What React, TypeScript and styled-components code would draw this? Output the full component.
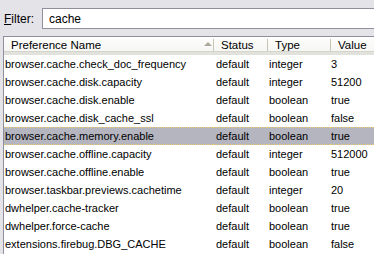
import React from 'react'
import styled, {createGlobalStyle} from 'styled-components'

const GlobalStyle = createGlobalStyle`
    html, body {
        margin: 0;
        padding: 0;
        background: #e4e3e8;
        overflow: hidden;
    }
    body {
        font-family: "Liberation Sans", Arial, sans-serif;
        font-size: 11px;
        color: #000;
    }
`

const Window = styled.div`
    width: 374px;
    height: 254px;
    display: flex;
    flex-direction: column;
    padding: 8px 0 0 3px;
    box-sizing: border-box;
`
const FilterRow = styled.div`
    display: flex;
    align-items: center;
    height: 21px;
`
const FilterLabel = styled.label`
    width: 38px;
    padding-left: 1px;
    font-size: 12px;
    u { text-decoration: underline; }
`
const FilterInput = styled.input`
    flex: 1;
    height: 21px;
    box-sizing: border-box;
    border: 1px solid #8f8f9d;
    border-right: none;
    background: #fff;
    padding: 0 0 0 6px;
    font-family: inherit;
    font-size: 12px;
    outline: none;
`
const Tree = styled.div`
    margin-top: 7px;
    flex: 1;
    background: #fff;
    border-left: 1px solid #8f8f9d;
    border-top: 1px solid #8f8f9d;
`
const Grid = styled.div`
    display: grid;
    grid-template-columns: 209px 54px 63px 1fr;
`
const HeaderCell = styled.div<{$first?: boolean}>`
    position: relative;
    height: 15px;
    display: flex;
    align-items: center;
    padding-left: ${p => (p.$first ? 7 : 8)}px;
    background: linear-gradient(#fdfdfd, #f6f6f3);
    border-bottom: 3px solid #e2e2dc;
    box-shadow: inset 0 -1px 0 #d6d5cd;
    font-size: 11.5px;
    &::before {
        content: '';
        display: ${p => (p.$first ? 'none' : 'block')};
        position: absolute;
        left: 0;
        top: 2px;
        bottom: 1px;
        width: 1px;
        background: #c7c5b2;
    }
`
const SortArrow = styled.span`
    position: absolute;
    right: 1px;
    top: 5px;
    width: 0;
    height: 0;
    border-left: 4px solid transparent;
    border-right: 4px solid transparent;
    border-bottom: 4px solid #aca899;
`
const Row = styled.div<{$selected?: boolean}>`
    display: contents;
    > div {
        background: ${p => (p.$selected ? '#b5b5c0' : 'transparent')};
        border-top: 1px ${p => (p.$selected ? 'dotted #e8c86a' : 'solid transparent')};
        border-bottom: 1px ${p => (p.$selected ? 'dotted #e8c86a' : 'solid transparent')};
    }
`
const Cell = styled.div<{$pad: number}>`
    height: 16px;
    line-height: 16px;
    padding-left: ${p => p.$pad}px;
    white-space: nowrap;
    overflow: hidden;
    font-size: 11px;
`

const prefs: [string, string, string, string][] = [
    ['browser.cache.check_doc_frequency', 'default', 'integer', '3'],
    ['browser.cache.disk.capacity', 'default', 'integer', '51200'],
    ['browser.cache.disk.enable', 'default', 'boolean', 'true'],
    ['browser.cache.disk_cache_ssl', 'default', 'boolean', 'false'],
    ['browser.cache.memory.enable', 'default', 'boolean', 'true'],
    ['browser.cache.offline.capacity', 'default', 'integer', '512000'],
    ['browser.cache.offline.enable', 'default', 'boolean', 'true'],
    ['browser.taskbar.previews.cachetime', 'default', 'integer', '20'],
    ['dwhelper.cache-tracker', 'default', 'boolean', 'true'],
    ['dwhelper.force-cache', 'default', 'boolean', 'true'],
    ['extensions.firebug.DBG_CACHE', 'default', 'boolean', 'false'],
]

const pads = [1, 3, 2, 1]

export default function App(): JSX.Element {
    return (
        <>
        <GlobalStyle />
        <Window>
            <FilterRow>
                <FilterLabel><u>F</u>ilter:</FilterLabel>
                <FilterInput type="text" defaultValue="cache" />
            </FilterRow>
            <Tree>
                <Grid>
                    <HeaderCell $first>Preference Name<SortArrow /></HeaderCell>
                    <HeaderCell>Status</HeaderCell>
                    <HeaderCell>Type</HeaderCell>
                    <HeaderCell>Value</HeaderCell>
                    {prefs.map((p, i) => (
                        <Row key={p[0]} $selected={i === 4}>
                            {p.map((v, j) => <Cell key={j} $pad={pads[j]}>{v}</Cell>)}
                        </Row>
                    ))}
                </Grid>
            </Tree>
        </Window>
        </>
    )
}
